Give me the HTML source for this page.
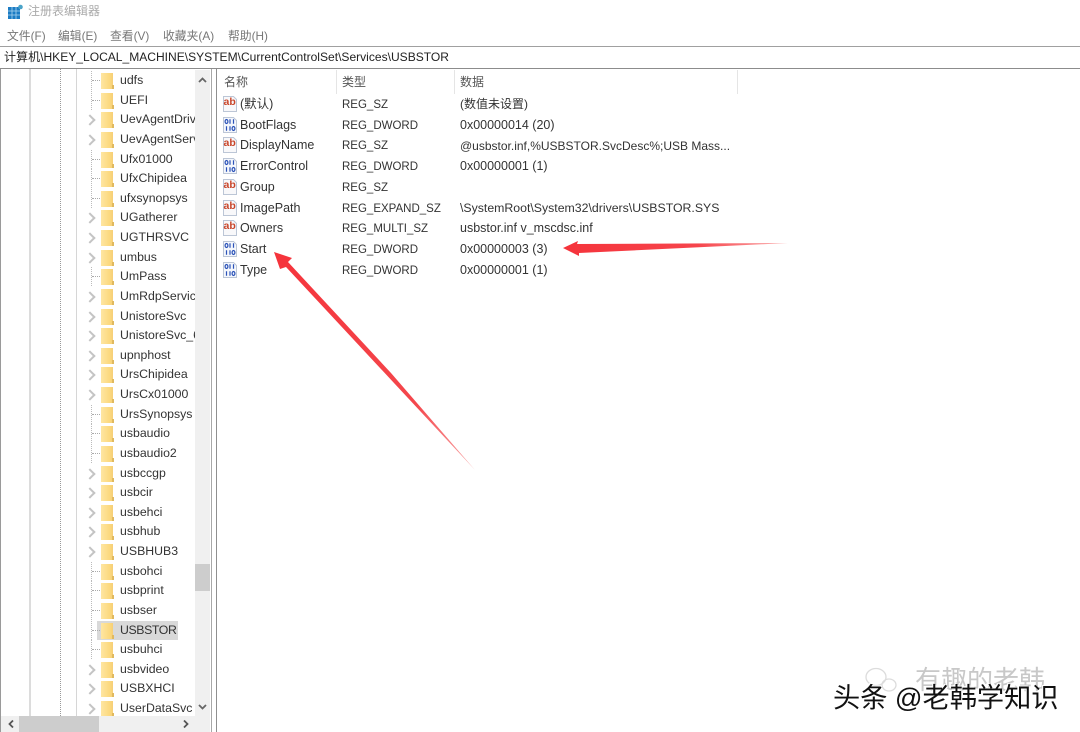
<!DOCTYPE html>
<html lang="zh"><head><meta charset="utf-8"><title>注册表编辑器</title>
<style>
html,body{margin:0;padding:0;background:#fff}
body{width:1080px;height:732px;overflow:hidden;position:relative;font-family:"Liberation Sans","Noto Sans CJK SC",sans-serif;color:#333;filter:blur(.35px)}
.a{position:absolute;white-space:nowrap}
.m{top:29px;font-size:11.8px;color:#777;line-height:14px}
.tree{position:absolute;left:0;top:71px;width:195px;height:645px;overflow:hidden}
.r{position:relative;height:19.64px;line-height:19.64px;font-size:12.3px;color:#333;padding-left:120px;white-space:nowrap;overflow:hidden}
.r:before{content:"";position:absolute;left:101px;top:2px;width:12px;height:16px;background:linear-gradient(90deg,#fee6a2,#fcd97f 70%,#f6cf77)}
.r:after{content:"";position:absolute;left:112px;top:14px;width:2px;height:4px;background:#e0b95f}
.d{background:linear-gradient(#bbb 50%,transparent 50%) 91px 0/1px 2px repeat-y}
.d b{position:absolute;left:92px;top:9px;width:8px;border-top:1px dotted #aaa}
.c b{position:absolute;left:86px;top:6px;width:6px;height:6px;border-top:2px solid #c4c4c4;border-right:2px solid #c4c4c4;transform:rotate(45deg)}
.sel{position:absolute;left:97px;top:621px;width:81px;height:19px;background:#d9d9d9}
.l{position:absolute;left:218px;width:530px;height:20.7px;line-height:20.7px;font-size:12.5px;color:#333}
.l span{position:absolute;white-space:nowrap}
.n{left:22px}.t{left:124px;top:1px;font-size:11.5px}.v{left:242px}
.ic{position:absolute;left:4px;top:2px;width:16px;height:16px}
.ab{left:5.500px;top:-2px;font-size:10.500px;font-weight:bold;color:#c8452a}
.h{position:absolute;top:75px;font-size:12px;line-height:14px;color:#555}
.ln{position:absolute;background:#e5e5e5;width:1px;top:70px;height:24px}
</style></head><body>
<svg class="a" style="left:8px;top:4px" width="15" height="16" viewBox="0 0 15 16"><rect x="0" y="3" width="12" height="12" fill="#1c7cc4"/><path d="M4 3v12M8 3v12M0 7h12M0 11h12" stroke="#a9d4ef" stroke-width=".8"/><circle cx="12.500" cy="3" r="2.300" fill="#4aa3c8"/></svg>
<div class="a" style="left:28px;top:4px;font-size:12px;line-height:15px;color:#aaa">注册表编辑器</div>
<div class="a m" style="left:7px">文件(F)</div>
<div class="a m" style="left:58px">编辑(E)</div>
<div class="a m" style="left:110px">查看(V)</div>
<div class="a m" style="left:163px">收藏夹(A)</div>
<div class="a m" style="left:228px">帮助(H)</div>
<div class="a" style="left:0;top:46px;width:1080px;height:21px;border-top:1px solid #a0a0a0;border-bottom:1px solid #8c8c8c"></div>
<div class="a" style="left:4px;top:50px;font-size:12.050px;line-height:15px;color:#222">计算机\HKEY_LOCAL_MACHINE\SYSTEM\CurrentControlSet\Services\USBSTOR</div>

<div class="a" style="left:0;top:69px;width:1px;height:663px;background:#9a9a9a"></div>
<div class="a" style="left:29px;top:69px;width:1.500px;height:647px;background:#dcdcdc"></div>
<div class="a" style="left:60px;top:69px;height:647px;border-left:1px dotted #999"></div>
<div class="a" style="left:76px;top:69px;width:1px;height:647px;background:#d6d6d6"></div>
<div class="sel"></div>
<div class="tree">
<div class="r d"><b></b>udfs</div>
<div class="r d"><b></b>UEFI</div>
<div class="r c"><b></b>UevAgentDriver</div>
<div class="r c"><b></b>UevAgentService</div>
<div class="r d"><b></b>Ufx01000</div>
<div class="r d"><b></b>UfxChipidea</div>
<div class="r d"><b></b>ufxsynopsys</div>
<div class="r c"><b></b>UGatherer</div>
<div class="r c"><b></b>UGTHRSVC</div>
<div class="r c"><b></b>umbus</div>
<div class="r d"><b></b>UmPass</div>
<div class="r c"><b></b>UmRdpService</div>
<div class="r c"><b></b>UnistoreSvc</div>
<div class="r c"><b></b>UnistoreSvc_6</div>
<div class="r c"><b></b>upnphost</div>
<div class="r c"><b></b>UrsChipidea</div>
<div class="r c"><b></b>UrsCx01000</div>
<div class="r d"><b></b>UrsSynopsys</div>
<div class="r d"><b></b>usbaudio</div>
<div class="r d"><b></b>usbaudio2</div>
<div class="r c"><b></b>usbccgp</div>
<div class="r c"><b></b>usbcir</div>
<div class="r c"><b></b>usbehci</div>
<div class="r c"><b></b>usbhub</div>
<div class="r c"><b></b>USBHUB3</div>
<div class="r d"><b></b>usbohci</div>
<div class="r d"><b></b>usbprint</div>
<div class="r d"><b></b>usbser</div>
<div class="r d" style="letter-spacing:-.4px"><b></b>USBSTOR</div>
<div class="r d"><b></b>usbuhci</div>
<div class="r c"><b></b>usbvideo</div>
<div class="r c"><b></b>USBXHCI</div>
<div class="r c"><b></b>UserDataSvc</div>
</div>

<div class="a" style="left:195px;top:70px;width:15px;height:646px;background:#f0f0f0"></div>
<div class="a" style="left:195px;top:564px;width:15px;height:27px;background:#cdcdcd"></div>
<svg class="a" style="left:195px;top:74px" width="15" height="12"><path d="M4 8l3.500-3.500L11 8" fill="none" stroke="#666" stroke-width="1.800"/></svg>
<svg class="a" style="left:195px;top:701px" width="15" height="12"><path d="M4 4l3.500 3.500L11 4" fill="none" stroke="#666" stroke-width="1.800"/></svg>
<div class="a" style="left:1px;top:716px;width:209px;height:16px;background:#f0f0f0"></div>
<div class="a" style="left:19px;top:716px;width:80px;height:16px;background:#cdcdcd"></div>
<svg class="a" style="left:5px;top:718px" width="12" height="12"><path d="M8 2.500L4.500 6 8 9.500" fill="none" stroke="#555" stroke-width="1.800"/></svg>
<svg class="a" style="left:180px;top:718px" width="12" height="12"><path d="M4 2.500L7.500 6 4 9.500" fill="none" stroke="#555" stroke-width="1.800"/></svg>
<div class="a" style="left:211px;top:69px;width:1px;height:663px;background:#a8a8a8"></div>
<div class="a" style="left:216px;top:69px;width:1px;height:663px;background:#8f8f8f"></div>

<div class="h" style="left:224px">名称</div>
<div class="h" style="left:342px">类型</div>
<div class="h" style="left:460px">数据</div>
<div class="ln" style="left:336px"></div>
<div class="ln" style="left:454px"></div>
<div class="ln" style="left:737px"></div>

<svg width="0" height="0" style="position:absolute"><defs>
<symbol id="bin" viewBox="0 0 16 16"><path d="M1.500.5h10l3 3v12h-13z" fill="#f4f7fc" stroke="#bcc6d6"/><g fill="none" stroke="#2b52b8" stroke-width="1.200"><ellipse cx="4.500" cy="4.500" rx="1.400" ry="2"/><path d="M8 2.300v4.400M11.500 2.300v4.400M4.500 9.300v4.400M8 9.300v4.400"/><ellipse cx="11.500" cy="11.500" rx="1.400" ry="2"/></g></symbol>
<symbol id="doc" viewBox="0 0 16 16"><path d="M1.500.5h10l3 3v12h-13z" fill="#f8f8fa" stroke="#bcc6d6"/></symbol>
</defs></svg>

<div class="l" style="top:94px"><svg class="ic"><use href="#doc"/></svg><span class="ab">ab</span><span class="n">(默认)</span><span class="t">REG_SZ</span><span class="v" style="font-size:12px">(数值未设置)</span></div>
<div class="l" style="top:114.700px"><svg class="ic"><use href="#bin"/></svg><span class="n">BootFlags</span><span class="t">REG_DWORD</span><span class="v">0x00000014 (20)</span></div>
<div class="l" style="top:135.400px"><svg class="ic"><use href="#doc"/></svg><span class="ab">ab</span><span class="n">DisplayName</span><span class="t">REG_SZ</span><span class="v" style="font-size:12px;top:1px">@usbstor.inf,%USBSTOR.SvcDesc%;USB Mass...</span></div>
<div class="l" style="top:156.100px"><svg class="ic"><use href="#bin"/></svg><span class="n">ErrorControl</span><span class="t">REG_DWORD</span><span class="v">0x00000001 (1)</span></div>
<div class="l" style="top:176.800px"><svg class="ic"><use href="#doc"/></svg><span class="ab">ab</span><span class="n">Group</span><span class="t">REG_SZ</span></div>
<div class="l" style="top:197.500px"><svg class="ic"><use href="#doc"/></svg><span class="ab">ab</span><span class="n">ImagePath</span><span class="t">REG_EXPAND_SZ</span><span class="v" style="font-size:12.300px">\SystemRoot\System32\drivers\USBSTOR.SYS</span></div>
<div class="l" style="top:218.200px"><svg class="ic"><use href="#doc"/></svg><span class="ab">ab</span><span class="n">Owners</span><span class="t">REG_MULTI_SZ</span><span class="v">usbstor.inf v_mscdsc.inf</span></div>
<div class="l" style="top:238.900px"><svg class="ic"><use href="#bin"/></svg><span class="n">Start</span><span class="t">REG_DWORD</span><span class="v">0x00000003 (3)</span></div>
<div class="l" style="top:259.600px"><svg class="ic"><use href="#bin"/></svg><span class="n">Type</span><span class="t">REG_DWORD</span><span class="v">0x00000001 (1)</span></div>

<svg class="a" style="left:0;top:0" width="1080" height="732">
<defs><linearGradient id="g1" x1="0" y1="0" x2="1" y2="0"><stop offset="0" stop-color="#f5333b"/><stop offset=".6" stop-color="#f6454c"/><stop offset="1" stop-color="#fbb0b0"/></linearGradient>
<linearGradient id="g2" gradientUnits="userSpaceOnUse" x1="274" y1="252" x2="475" y2="470"><stop offset="0" stop-color="#f5333b"/><stop offset=".7" stop-color="#f4474c"/><stop offset="1" stop-color="#f9a9a9"/></linearGradient></defs>
<polygon points="563,248 578,241 577,244 788,243 579,253 579,256" fill="url(#g1)"/>
<polygon points="274,252 292,258 288,262 391,373 475,470 286,267 280,269" fill="url(#g2)"/>
<g fill="none" stroke="#dcdcdc" stroke-width="1.300"><ellipse cx="876" cy="677" rx="10" ry="8.500"/><ellipse cx="889" cy="685" rx="7" ry="6"/></g>
</svg>
<div class="a" style="left:915px;top:664px;font-size:26px;line-height:32px;color:#c8c8c8">有趣的老韩</div>
<div class="a" style="left:833px;top:681px;font-size:27.200px;line-height:34px;color:#111;text-shadow:1px 1px 0 #fff,-1px -1px 0 #fff">头条 @老韩学知识</div>
</body></html>
